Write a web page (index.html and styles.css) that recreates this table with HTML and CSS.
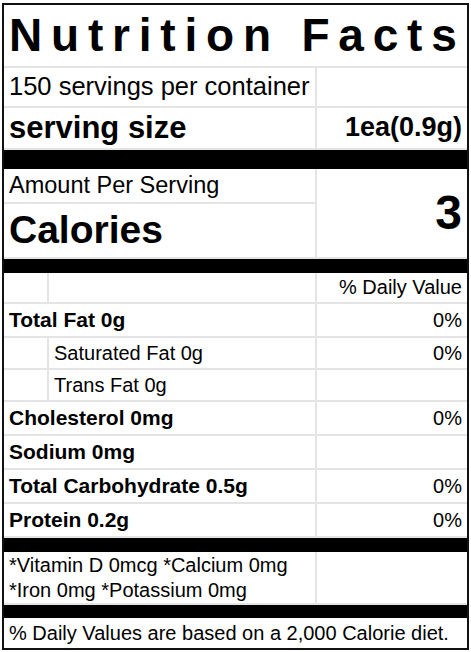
FILE: index.html
```html
<!DOCTYPE html>
<html lang="en">
    <head>
        <meta charset="UTF-8">
        <meta name="viewport" content="width=device-width, initial-scale=1.0">
        <title>Nutrition Facts</title>
        <link rel="stylesheet" href="styles.css">
    </head>
    <body>

        <div class="label">
            <table class="facts">
                <colgroup>
                    <col class="col-indent">
                    <col class="col-name">
                    <col class="col-value">
                </colgroup>

                <!-- Title -->
                <tr class="row-title">
                    <td colspan="3" class="title">Nutrition Facts</td>
                </tr>

                <!-- Servings -->
                <tr class="row-servings">
                    <td colspan="2" class="servings">150 servings per container</td>
                    <td></td>
                </tr>
                <tr class="row-size">
                    <td colspan="2" class="size">serving size</td>
                    <td class="size-value">1ea(0.9g)</td>
                </tr>
                <tr class="bar bar-tall"><td colspan="3"></td></tr>

                <!-- Calories -->
                <tr class="row-amount">
                    <td colspan="2" class="amount">Amount Per Serving</td>
                    <td rowspan="2" class="cal-value">3</td>
                </tr>
                <tr class="row-calories">
                    <td colspan="2" class="calories">Calories</td>
                </tr>
                <tr class="bar"><td colspan="3"></td></tr>

                <!-- Nutrients -->
                <tr class="row-dv">
                    <td></td>
                    <td></td>
                    <td class="value">% Daily Value</td>
                </tr>
                <tr class="row-nutrient">
                    <td colspan="2" class="nutrient">Total Fat 0g</td>
                    <td class="value">0%</td>
                </tr>
                <tr class="row-sub">
                    <td></td>
                    <td class="sub">Saturated Fat 0g</td>
                    <td class="value">0%</td>
                </tr>
                <tr class="row-sub">
                    <td></td>
                    <td class="sub">Trans Fat 0g</td>
                    <td></td>
                </tr>
                <tr class="row-nutrient">
                    <td colspan="2" class="nutrient">Cholesterol 0mg</td>
                    <td class="value">0%</td>
                </tr>
                <tr class="row-nutrient">
                    <td colspan="2" class="nutrient">Sodium 0mg</td>
                    <td></td>
                </tr>
                <tr class="row-nutrient">
                    <td colspan="2" class="nutrient">Total Carbohydrate 0.5g</td>
                    <td class="value">0%</td>
                </tr>
                <tr class="row-nutrient">
                    <td colspan="2" class="nutrient">Protein 0.2g</td>
                    <td class="value">0%</td>
                </tr>
                <tr class="bar"><td colspan="3"></td></tr>

                <!-- Vitamins -->
                <tr class="row-vitamins">
                    <td colspan="2" class="vitamins">*Vitamin D 0mcg *Calcium 0mg<br>*Iron 0mg *Potassium 0mg</td>
                    <td></td>
                </tr>
                <tr class="bar bar-short"><td colspan="3"></td></tr>

                <!-- Footnote -->
                <tr class="row-foot">
                    <td colspan="3" class="foot">% Daily Values are based on a 2,000 Calorie diet.</td>
                </tr>
            </table>
        </div>

    </body>
</html>
```

FILE: styles.css
```css
/* Page */
body {
  margin: 0;
  background-color: #fff;
  color: #000;
  font-family: "Liberation Sans", Arial, sans-serif;
}

/* Label Container */
.label {
  width: 463px;
  margin: 3px 0 0 2px;
  border: 2px solid #111;
}

/* Table */
.facts {
  width: 100%;
  border-collapse: collapse;
  border-style: hidden; /* outer edges come from .label */
  table-layout: fixed;
}

.col-indent { width: 44px; }
.col-name { width: 268px; }

.facts td {
  border: 2px solid #e4e4e4;
  padding: 0 5px;
  font-size: 20px;
  line-height: 1.15;
  vertical-align: middle;
  white-space: nowrap;
}

/* Row Heights */
.row-title { height: 62px; }
.row-servings { height: 40px; }
.row-size { height: 42px; }
.row-amount { height: 35px; }
.row-calories { height: 55px; }
.row-dv { height: 31px; }
.row-nutrient { height: 34px; }
.row-sub { height: 32px; }
.row-vitamins { height: 53px; }
.row-foot { height: 31px; }

/* Black Bars */
.bar { height: 14px; }
.bar-tall { height: 19px; }
.bar-short { height: 13px; }

.facts .bar td {
  background-color: #000;
  padding: 0;
  border-color: #000;
}

/* Text Styles */
.facts .title {
  padding-right: 0;
  font-size: 46px;
  font-weight: bold;
  letter-spacing: 8.8px;
}

.facts .servings {
  font-size: 25.5px;
}

.facts .size {
  font-size: 31px;
  font-weight: bold;
}

.facts .size-value {
  font-size: 27px;
  font-weight: bold;
  text-align: right;
}

.facts .amount {
  font-size: 23.5px;
}

.facts .calories {
  font-size: 39px;
  font-weight: bold;
}

.facts .cal-value {
  font-size: 48px;
  font-weight: bold;
  text-align: right;
}

.facts .nutrient {
  font-size: 21px;
  font-weight: bold;
}

.facts .value {
  text-align: right;
}

.facts .vitamins {
  line-height: 1.25;
}
```
